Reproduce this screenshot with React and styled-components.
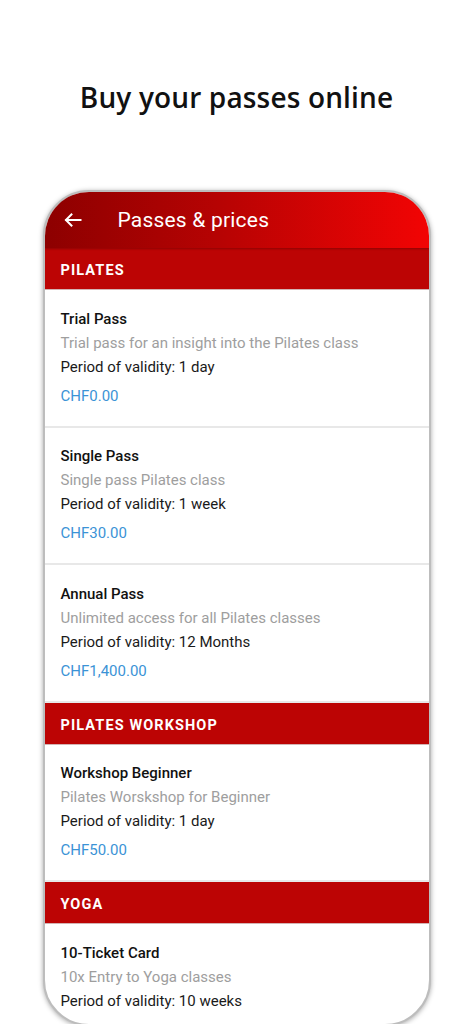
import React from "react";
import styled, { createGlobalStyle } from "styled-components";

const Global = createGlobalStyle`
  html, body { margin: 0; padding: 0; background: #fff; }
  body { font-family: Roboto, "Noto Sans", sans-serif; }
`;

const Page = styled.div`
  display: flex;
  flex-direction: column;
  align-items: center;
  height: 1024px;
  overflow: hidden;
`;

const Heading = styled.h1`
  margin: 78px 0 0;
  font-family: "Open Sans", sans-serif;
  font-weight: 600;
  font-size: 28px;
  line-height: 38px;
  color: #111;
  letter-spacing: 0.15px;
`;

const Phone = styled.div`
  margin-top: 74px;
  width: 384px;
  height: 832px;
  flex-shrink: 0;
  border: 2px solid #bdbdbd;
  border-radius: 46px;
  overflow: hidden;
  box-shadow: 0 1px 5px rgba(0, 0, 0, 0.35);
  background: #fff;
  display: flex;
  flex-direction: column;
`;

const AppBar = styled.div`
  height: 56px;
  flex-shrink: 0;
  display: flex;
  align-items: center;
  gap: 35px;
  padding-left: 18px;
  background: linear-gradient(to right, #8d0000 0%, #b60303 45%, #f20404 100%);
  box-shadow: 0 1px 2px rgba(0, 0, 0, 0.25);
  position: relative;
  z-index: 1;
`;

const BackIcon = styled.svg`
  width: 20px;
  height: 20px;
  display: block;
`;

const BarTitle = styled.div`
  color: #fff;
  font-size: 21px;
  line-height: 24px;
  font-weight: 400;
  letter-spacing: 0.2px;
  margin-top: -1px;
`;

const SectionHeader = styled.div`
  height: 42px;
  box-sizing: border-box;
  padding-top: 3px;
  flex-shrink: 0;
  display: flex;
  align-items: center;
  padding-left: 16px;
  background: #bc0404;
  color: #fff;
  font-weight: 700;
  font-size: 14.5px;
  letter-spacing: 1.1px;
  box-shadow: inset 0 -1px 0 #d3b3b3;
`;

const Item = styled.div`
  flex-shrink: 0;
  padding: 16.5px 16px 18px;
  border-bottom: 2px solid #e8e8e8;
  display: flex;
  flex-direction: column;
`;

const Line = styled.div`
  font-size: 15px;
  line-height: 24px;
  color: ${(p) => p.$color || "#1a1a1a"};
  font-weight: ${(p) => p.$weight || 400};
  margin-top: ${(p) => p.$mt || 0}px;
`;

const data = [
  {
    name: "PILATES",
    items: [
      { t: "Trial Pass", d: "Trial pass for an insight into the Pilates class", v: "1 day", p: "CHF0.00" },
      { t: "Single Pass", d: "Single pass Pilates class", v: "1 week", p: "CHF30.00" },
      { t: "Annual Pass", d: "Unlimited access for all Pilates classes", v: "12 Months", p: "CHF1,400.00" },
    ],
  },
  {
    name: "PILATES WORKSHOP",
    items: [
      { t: "Workshop Beginner", d: "Pilates Worskshop for Beginner", v: "1 day", p: "CHF50.00" },
    ],
  },
  {
    name: "YOGA",
    items: [
      { t: "10-Ticket Card", d: "10x Entry to Yoga classes", v: "10 weeks" },
    ],
  },
];

export default function App() {
  return (
    <>
      <Global />
      <Page>
        <Heading>Buy your passes online</Heading>
        <Phone>
          <AppBar>
            <BackIcon viewBox="0 0 24 24" fill="none" stroke="#fff" strokeWidth="2.4" strokeLinecap="square">
              <path d="M21 12H4" />
              <path d="M11 4.5L3.5 12L11 19.5" strokeLinecap="butt" />
            </BackIcon>
            <BarTitle>Passes &amp; prices</BarTitle>
          </AppBar>
          {data.map((sec) => (
            <React.Fragment key={sec.name}>
              <SectionHeader>{sec.name}</SectionHeader>
              {sec.items.map((it) => (
                <Item key={it.t}>
                  <Line $weight={500} $color="#111">{it.t}</Line>
                  <Line $color="#9e9e9e">{it.d}</Line>
                  <Line>Period of validity: {it.v}</Line>
                  {it.p && <Line $color="#3b93d6" $mt={5}>{it.p}</Line>}
                </Item>
              ))}
            </React.Fragment>
          ))}
        </Phone>
      </Page>
    </>
  );
}
